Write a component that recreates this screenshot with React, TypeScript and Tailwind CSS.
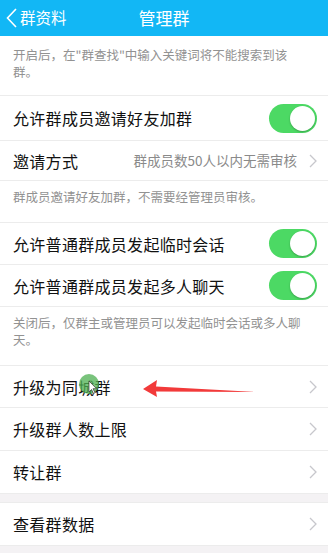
import React from "react";

const FONT = { fontFamily: '"Noto Sans CJK SC", "Noto Sans", sans-serif' };

function Chevron() {
  return (
    <svg width="8" height="14" viewBox="0 0 8 14" className="shrink-0">
      <path d="M1 1l6 6-6 6" fill="none" stroke="#c7c7cc" strokeWidth="1.3" />
    </svg>
  );
}

function Toggle() {
  return (
    <div className="relative w-[48px] h-[29px] rounded-full bg-[#4cd964] shrink-0">
      <div className="absolute right-[2px] top-[2px] w-[25px] h-[25px] rounded-full bg-white shadow-[0_1px_2px_rgba(0,0,0,0.25)]" />
    </div>
  );
}

function Row({
  label,
  right,
  h = "h-[42px]",
  border = true,
}: {
  label: string;
  right: React.ReactNode;
  h?: string;
  border?: boolean;
}) {
  return (
    <div
      className={`flex items-center justify-between pl-[13px] pr-[11px] bg-white ${h} ${
        border ? "border-b border-[#ececec]" : ""
      }`}
    >
      <span className="text-[16px] text-[#111] tracking-[0.3px]">{label}</span>
      {right}
    </div>
  );
}

function Desc({ text, h, pt = "pt-[7px]" }: { text: string; h: string; pt?: string }) {
  return (
    <div className={`bg-white pl-[13px] pr-[18px] border-b border-[#ececec] ${pt} ${h}`}>
      <p className="text-[12.5px] leading-[17px] text-[#929292]">{text}</p>
    </div>
  );
}

export default function App() {
  return (
    <div className="relative w-[328px] h-[553px] overflow-hidden bg-white" style={FONT}>
      {/* header */}
      <div className="relative h-[36px] bg-[#12b7f5] flex items-center justify-center">
        <div className="absolute left-[6px] top-0 h-full flex items-center gap-[3px]">
          <svg width="11" height="20" viewBox="0 0 11 20">
            <path d="M10 1L1.5 10 10 19" fill="none" stroke="white" strokeWidth="1.6" />
          </svg>
          <span className="text-[15.5px] text-white">群资料</span>
        </div>
        <span className="text-[17px] text-white">管理群</span>
      </div>

      <Desc
        text={'开启后，在"群查找"中输入关键词将不能搜索到该群。'}
        h="h-[60px]"
        pt="pt-[10px]"
      />

      <Row label="允许群成员邀请好友加群" h="h-[45px]" right={<Toggle />} />
      <Row
        label="邀请方式"
        h="h-[40px]"
        right={
          <div className="flex items-center gap-[12px]">
            <span className="text-[13.5px] text-[#8a8a8a]">群成员数50人以内无需审核</span>
            <Chevron />
          </div>
        }
      />
      <Desc text="群成员邀请好友加群，不需要经管理员审核。" h="h-[42px]" />

      <Row label="允许普通群成员发起临时会话" right={<Toggle />} />
      <Row label="允许普通群成员发起多人聊天" right={<Toggle />} />
      <Desc text="关闭后，仅群主或管理员可以发起临时会话或多人聊天。" h="h-[59px]" />

      <Row label="升级为同城群" right={<Chevron />} />
      <Row label="升级群人数上限" h="h-[43px]" right={<Chevron />} />
      <Row label="转让群" h="h-[42px]" border={false} right={<Chevron />} />
      <div className="h-[10px] bg-[#f4f2f4] border-t border-b border-[#ececec]" />
      <Row label="查看群数据" h="h-[43px]" right={<Chevron />} />
      <div className="h-[10px] bg-[#f4f2f4]" />

      {/* annotation overlay */}
      <svg
        className="absolute left-0 top-0 pointer-events-none"
        width="328"
        height="553"
        viewBox="0 0 328 553"
      >
        <circle cx="89" cy="384" r="10" fill="#4caf50" opacity="0.75" />
        <path
          d="M89 381 l0 11 l2.5 -2.5 l2 4 l1.5 -0.8 l-2 -4 l3.5 0 z"
          fill="white"
          stroke="#333"
          strokeWidth="0.7"
        />
        <path d="M143 389 L157 380 L156 386.5 L256 392 L156 391.5 L157 397 Z" fill="#f23a3a" />
      </svg>
    </div>
  );
}
